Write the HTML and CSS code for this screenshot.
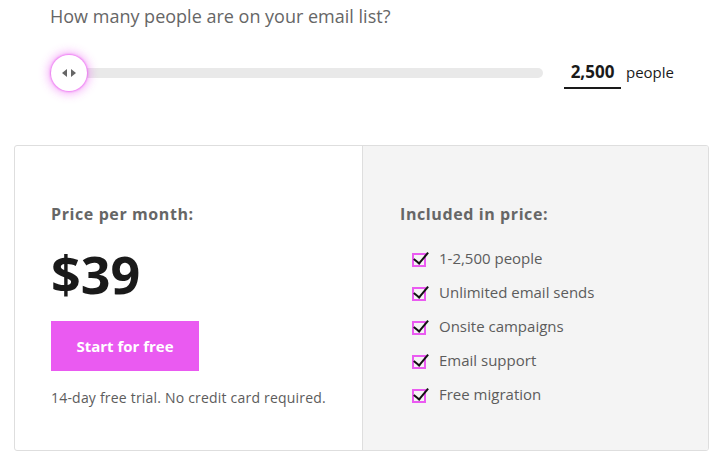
FILE: index.html
```html
<!DOCTYPE html>
<html lang="en">
<head>
    <meta charset="UTF-8">
    <meta name="viewport" content="width=device-width, initial-scale=1.0">
    <title>Pricing</title>
    <link rel="stylesheet" href="styles.css">
</head>
<body>
    <main class="pricing">
        <section class="list-size">
            <h2 class="question">How many people are on your email list?</h2>
            <div class="slider-row">
                <div class="slider">
                    <div class="track"></div>
                    <div class="thumb">
                        <svg width="18" height="10" viewBox="0 0 18 10">
                            <path d="M7 1 L2 5 L7 9 Z" fill="#666"/>
                            <path d="M11 1 L16 5 L11 9 Z" fill="#666"/>
                        </svg>
                    </div>
                </div>
                <div class="count">
                    <span class="count-value">2,500</span>
                    <span class="count-unit">people</span>
                </div>
            </div>
        </section>

        <section class="card">
            <div class="price-col">
                <h3 class="label">Price per month:</h3>
                <div class="price">$39</div>
                <a href="#" class="btn">Start for free</a>
                <p class="note">14-day free trial. No credit card required.</p>
            </div>
            <div class="features-col">
                <h3 class="label">Included in price:</h3>
                <ul class="features">
                    <li><span class="check"></span>1-2,500 people</li>
                    <li><span class="check"></span>Unlimited email sends</li>
                    <li><span class="check"></span>Onsite campaigns</li>
                    <li><span class="check"></span>Email support</li>
                    <li><span class="check"></span>Free migration</li>
                </ul>
            </div>
        </section>
    </main>
</body>
</html>
```

FILE: styles.css
```css
:root {
    --magenta: #ea5af1;
    --text-color: #1a1a1a;
    --muted: #5c5c5c;
    --border-color: #dedede;
}

* {
    box-sizing: border-box;
    margin: 0;
    padding: 0;
}

body {
    font-family: "Open Sans", "Liberation Sans", sans-serif;
    color: var(--text-color);
    background-color: white;
}

.pricing {
    padding: 0 12px 0 14px;
}

.list-size {
    padding: 4px 0 0 36px;
    height: 145px;
}

.question {
    font-size: 18px;
    font-weight: 400;
    color: #666;
    line-height: 25px;
}

.slider-row {
    display: flex;
    align-items: center;
    margin-top: 25px;
}

.slider {
    position: relative;
    width: 493px;
    height: 38px;
    display: flex;
    align-items: center;
}

.track {
    width: 100%;
    height: 10px;
    border-radius: 5px;
    background-color: #e9e9e9;
}

.thumb {
    position: absolute;
    left: 1px;
    top: 1px;
    width: 36px;
    height: 36px;
    border-radius: 50%;
    background-color: white;
    box-shadow: 0 0 2px 1px rgba(234, 90, 241, 0.7), 0 0 10px 3px rgba(234, 90, 241, 0.45);
    display: flex;
    align-items: center;
    justify-content: center;
}

.count {
    display: flex;
    align-items: baseline;
    margin-left: 21px;
    padding-top: 4px;
}

.count-value {
    display: inline-block;
    width: 57px;
    text-align: center;
    font-size: 17px;
    font-weight: 700;
    line-height: 20px;
    padding-bottom: 5px;
    border-bottom: 2px solid var(--text-color);
}

.count-unit {
    margin-left: 5px;
    font-size: 15px;
}

.card {
    display: flex;
    width: 695px;
    height: 306px;
    border: 1px solid var(--border-color);
    border-radius: 3px;
    overflow: hidden;
}

.price-col {
    width: 348px;
    padding: 57px 36px 0;
    border-right: 1px solid var(--border-color);
}

.features-col {
    flex: 1;
    padding: 57px 37px 0;
    background-color: #f4f4f4;
}

.label {
    font-size: 16px;
    font-weight: 700;
    letter-spacing: 0.6px;
    color: #666;
    line-height: 22px;
}

.price {
    font-size: 52px;
    font-weight: 700;
    line-height: 50px;
    margin-top: 24px;
}

.btn {
    display: inline-block;
    width: 148px;
    height: 50px;
    line-height: 50px;
    margin-top: 22px;
    text-align: center;
    background-color: var(--magenta);
    color: white;
    font-size: 15px;
    font-weight: 700;
    text-decoration: none;
}

.note {
    margin-top: 17px;
    font-size: 14px;
    letter-spacing: 0.2px;
    color: var(--muted);
}

.features {
    list-style: none;
    margin-top: 16px;
}

.features li {
    display: flex;
    align-items: center;
    height: 34px;
    font-size: 15px;
    color: var(--muted);
}

.check {
    position: relative;
    width: 14px;
    height: 14px;
    margin: 4px 13px 0 12px;
    border: 2px solid var(--magenta);
}

.check::after {
    content: "";
    position: absolute;
    left: 3px;
    top: -6px;
    width: 6px;
    height: 13px;
    border-right: 2.5px solid #111;
    border-bottom: 2.5px solid #111;
    transform: rotate(40deg);
}
```
